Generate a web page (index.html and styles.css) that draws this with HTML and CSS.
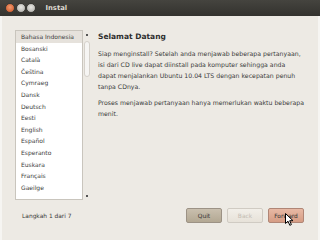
FILE: index.html
```html
<!DOCTYPE html>
<html>
<head>
<meta charset="utf-8">
<link rel="stylesheet" href="styles.css">
</head>
<body>
<div class="window">
  <div class="titlebar">
    <span class="tb-btn close"></span>
    <span class="tb-btn"></span>
    <span class="tb-btn"></span>
    <span class="title">Instal</span>
  </div>
  <div class="content">
    <div class="main">
      <div class="listwrap">
        <ul class="list">
          <li class="sel">Bahasa Indonesia</li>
          <li>Bosanski</li>
          <li>Català</li>
          <li>Čeština</li>
          <li>Cymraeg</li>
          <li>Dansk</li>
          <li>Deutsch</li>
          <li>Eesti</li>
          <li>English</li>
          <li>Español</li>
          <li>Esperanto</li>
          <li>Euskara</li>
          <li>Français</li>
          <li>Gaeilge</li>
        </ul>
        <div class="scroll">
          <span class="arrow"></span>
          <div class="track"><div class="thumb"></div></div>
          <span class="arrow"></span>
        </div>
      </div>
      <div class="text">
        <h1>Selamat Datang</h1>
        <p>Siap menginstall? Setelah anda menjawab beberapa pertanyaan,<br>isi dari CD live dapat diinstall pada komputer sehingga anda<br>dapat menjalankan Ubuntu 10.04 LTS dengan kecepatan penuh<br>tanpa CDnya.</p>
        <p>Proses menjawab pertanyaan hanya memerlukan waktu beberapa<br>menit.</p>
      </div>
    </div>
    <div class="footer">
      <span class="step">Langkah 1 dari 7</span>
      <div class="buttons">
        <button class="btn quit">Quit</button>
        <button class="btn back">Back</button>
        <button class="btn fwd">Forward<svg class="cursor" width="9" height="13" viewBox="0 0 9 13"><path d="M0.5 0.5 L0.5 10.5 L3 8.2 L4.8 12.3 L6.4 11.6 L4.7 7.7 L8 7.7 Z" fill="#fff" stroke="#000" stroke-width="1"/></svg></button>
      </div>
    </div>
  </div>
</div>
</body>
</html>
```
FILE: styles.css
```css
* { box-sizing: border-box; }
html, body { margin: 0; padding: 0; }
body { width: 320px; height: 241px; background: #fff; font-family: "DejaVu Sans", sans-serif; overflow: hidden; }
.window { width: 320px; height: 240px; display: flex; flex-direction: column; background: #edeae4; border-left: 2px solid #f6f5f2; border-right: 2px solid #f6f5f2; }
.titlebar { height: 16px; flex: none; display: flex; align-items: center; background: linear-gradient(#45443f, #33322e); padding-left: 5px; margin: 0 -2px; }
.tb-btn { width: 10px; height: 10px; border-radius: 50%; background: radial-gradient(circle at 50% 40%, #e8e7e2, #a9a8a3); margin-right: 0.5px; border: 1px solid #3a3935; }
.tb-btn.close { background: radial-gradient(circle at 50% 40%, #f29a70, #c9501f); }
.title { color: #dfdbd2; font-weight: bold; font-size: 6.8px; margin-left: 9px; }
.content { flex: 1; display: flex; flex-direction: column; padding: 14px 14px 0 13px; }
.main { display: flex; gap: 8px; }
.listwrap { display: flex; width: 75px; height: 170px; flex: none; }
.list { list-style: none; margin: 0; padding: 0; width: 68px; background: #fff; border: 1px solid #c9c5bd; font-size: 6px; color: #3c3c3c; overflow: hidden; }
.list li { height: 11.6px; line-height: 11.6px; padding-left: 5px; white-space: nowrap; }
.list li.sel { background: #e6e2dc; }
.scroll { width: 7px; display: flex; flex-direction: column; align-items: center; padding: 4px 0 3px; }
.arrow { width: 2px; height: 2px; background: #555; flex: none; }
.track { flex: 1; width: 100%; padding: 5px 0 0; }
.thumb { width: 6px; height: 36px; margin-left: 0.5px; border: 1px solid #d5d1ca; border-radius: 3px; background: #f6f5f3; }
.text { flex: 1; min-width: 0; color: #3a3a3a; white-space: nowrap; }
h1 { margin: 2px 0 7px; font-size: 7.5px; font-weight: bold; color: #2e2e2e; }
p { margin: 0 0 5px; font-size: 6.2px; line-height: 11px; }
.footer { display: flex; align-items: center; justify-content: space-between; margin-top: 8px; padding-right: 0; }
.step { font-size: 5.9px; color: #3a3a3a; margin-left: 7px; }
.buttons { display: flex; gap: 5px; }
.btn { position: relative; width: 36px; height: 15px; padding: 0; border: 1px solid #9c9285; border-radius: 2px; font-family: "DejaVu Sans", sans-serif; font-size: 5.9px; color: #333; }
.quit { background: linear-gradient(#c9bfae, #b3a893); }
.back { background: linear-gradient(#f2efe9, #e7e2d9); color: #c3bdb4; border-color: #d0cbc3; }
.fwd { background: linear-gradient(#e8b9a4, #d59c84); border-color: #b08676; }
.cursor { position: absolute; left: 16px; top: 4px; }
```
